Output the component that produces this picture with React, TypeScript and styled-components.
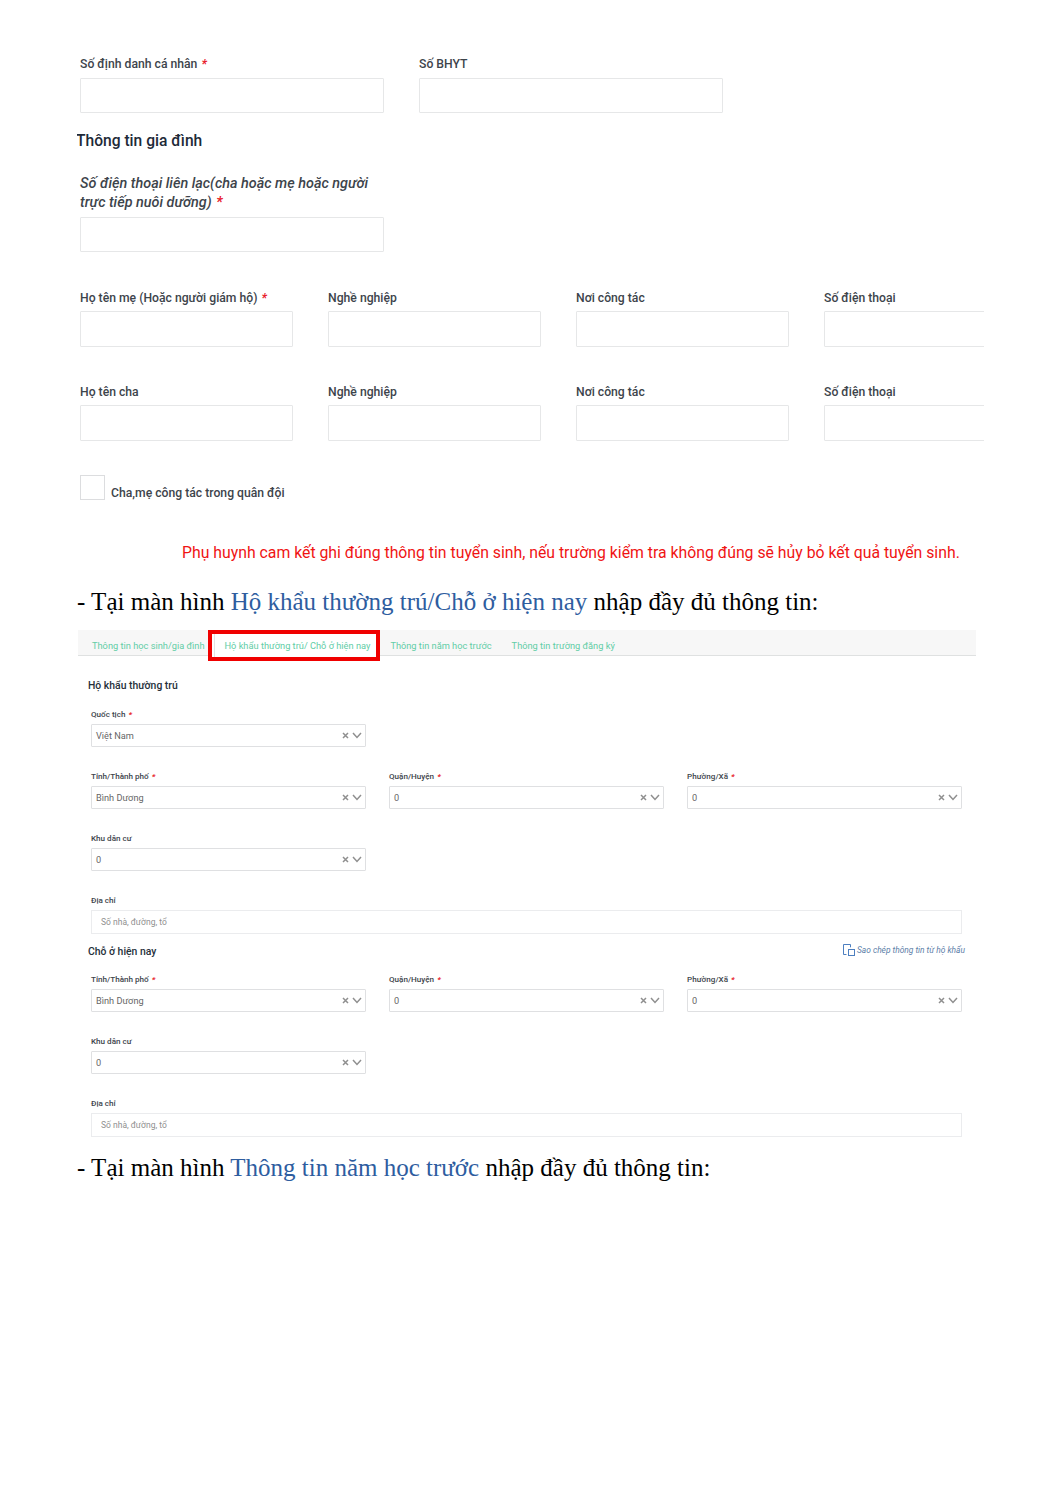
import React from 'react';
import styled, { createGlobalStyle } from 'styled-components';

const GlobalStyle = createGlobalStyle`
	html, body {
		margin: 0;
		padding: 0;
		background: #fff;
	}
	body {
		font-family: Roboto, 'Liberation Sans', sans-serif;
	}
`;

const Req = () => <Star>*</Star>;

const ClearIcon = () => (
	<svg width='7' height='7' viewBox='0 0 7 7' fill='none' stroke='#8f8f8f' strokeWidth='1.5'>
		<path d='M1 1l5 5M6 1l-5 5' />
	</svg>
);

const ChevronIcon = () => (
	<svg width='10' height='7' viewBox='0 0 10 7' fill='none' stroke='#8f8f8f' strokeWidth='1.5'>
		<path d='M1 1l4 4.4L9 1' />
	</svg>
);

const CopyIcon = () => (
	<svg width='12' height='12' viewBox='0 0 12 12' fill='none' stroke='#4d7fc0' strokeWidth='1'>
		<path d='M7.5.5H.5v10h3' />
		<path d='M7.5.5v2.8' />
		<rect x='5.5' y='5.5' width='6' height='6' />
	</svg>
);

const SelectBox = ({ label, value }: { label: string; value: string }) => (
	<SmallField>
		<SmallLabel>
			{label} <Req />
		</SmallLabel>
		<Select>
			<span>{value}</span>
			<SelectIcons>
				<ClearIcon />
				<ChevronIcon />
			</SelectIcons>
		</Select>
	</SmallField>
);

const KhuDanCu = () => (
	<SmallField>
		<SmallLabel>Khu dân cư</SmallLabel>
		<Select>
			<span>0</span>
			<SelectIcons>
				<ClearIcon />
				<ChevronIcon />
			</SelectIcons>
		</Select>
	</SmallField>
);

const AddressRow = () => (
	<Row3>
		<Wide>
			<SmallField>
				<SmallLabel>Địa chỉ</SmallLabel>
				<AddressInput>Số nhà, đường, tổ</AddressInput>
			</SmallField>
		</Wide>
	</Row3>
);

const AddressBlock = ({ province }: { province: string }) => (
	<>
		<Row3>
			<SelectBox label='Tỉnh/Thành phố' value={province} />
			<SelectBox label='Quận/Huyện' value='0' />
			<SelectBox label='Phường/Xã' value='0' />
		</Row3>
		<Row3>
			<KhuDanCu />
		</Row3>
		<AddressRow />
	</>
);

const App = () => {
	return (
		<Page>
			<GlobalStyle />
			<FamilyForm>
				<TwoCols>
					<div>
						<Label>
							Số định danh cá nhân <Req />
						</Label>
						<Input />
					</div>
					<div>
						<Label>Số BHYT</Label>
						<Input />
					</div>
				</TwoCols>
				<Heading>Thông tin gia đình</Heading>
				<PhoneField>
					<ItalicLabel>
						Số điện thoại liên lạc(cha hoặc mẹ hoặc người trực tiếp nuôi dưỡng) <Req />
					</ItalicLabel>
					<Input />
				</PhoneField>
				<ParentRow>
					<div>
						<Label>
							Họ tên mẹ (Hoặc người giám hộ) <Req />
						</Label>
						<TallInput />
					</div>
					<div>
						<Label>Nghề nghiệp</Label>
						<TallInput />
					</div>
					<div>
						<Label>Nơi công tác</Label>
						<TallInput />
					</div>
					<div>
						<Label>Số điện thoại</Label>
						<TallInput />
					</div>
				</ParentRow>
				<ParentRow>
					<div>
						<Label>Họ tên cha</Label>
						<TallInput />
					</div>
					<div>
						<Label>Nghề nghiệp</Label>
						<TallInput />
					</div>
					<div>
						<Label>Nơi công tác</Label>
						<TallInput />
					</div>
					<div>
						<Label>Số điện thoại</Label>
						<TallInput />
					</div>
				</ParentRow>
				<CheckRow>
					<CheckBox />
					<Label>Cha,mẹ công tác trong quân đội</Label>
				</CheckRow>
				<Warning>
					Phụ huynh cam kết ghi đúng thông tin tuyển sinh, nếu trường kiểm tra không đúng sẽ hủy bỏ kết quả tuyển sinh.
				</Warning>
			</FamilyForm>

			<DocLine>
				- Tại màn hình <Blue>Hộ khẩu thường trú/Chỗ ở hiện nay</Blue> nhập đầy đủ thông tin:
			</DocLine>

			<Shot>
				<Tabs>
					<Tab>Thông tin học sinh/gia đình</Tab>
					<Tab>
						Hộ khẩu thường trú/ Chỗ ở hiện nay
						<RedBox />
					</Tab>
					<Tab>Thông tin năm học trước</Tab>
					<Tab>Thông tin trường đăng ký</Tab>
				</Tabs>
				<Panel>
					<SectionHead>
						<SectionTitle>Hộ khẩu thường trú</SectionTitle>
					</SectionHead>
					<Row3 $first>
						<SelectBox label='Quốc tịch' value='Việt Nam' />
					</Row3>
					<AddressBlock province='Bình Dương' />
					<SectionHead $second>
						<SectionTitle>Chỗ ở hiện nay</SectionTitle>
						<CopyLink>
							<CopyIcon />
							Sao chép thông tin từ hộ khẩu
						</CopyLink>
					</SectionHead>
					<SecondBlock>
						<AddressBlock province='Bình Dương' />
					</SecondBlock>
				</Panel>
			</Shot>

			<LastLine>
				- Tại màn hình <Blue>Thông tin năm học trước</Blue> nhập đầy đủ thông tin:
			</LastLine>
		</Page>
	);
};

export default App;

const Page = styled.div`
	width: 1061px;
	height: 1500px;
	overflow: hidden;
	padding: 56px 0 0 77px;
	box-sizing: border-box;
`;

const FamilyForm = styled.div`
	width: 907px;
	padding-left: 3px;
	box-sizing: border-box;
	overflow: hidden;
`;

const TwoCols = styled.div`
	display: grid;
	grid-template-columns: 304px 304px;
	column-gap: 35px;
`;

const Label = styled.div`
	font-size: 12.2px;
	line-height: 16px;
	font-weight: 500;
	color: #3d444b;
	margin-bottom: 6px;
	white-space: nowrap;
`;

const Star = styled.span`
	margin-left: 1px;
	color: #e8202a;
	font-style: italic;
	font-weight: 700;
`;

const Input = styled.div`
	height: 35px;
	box-sizing: border-box;
	background: #fff;
	border: 1px solid #e6e7e8;
	border-radius: 1px;
`;

const TallInput = styled(Input)`
	height: 36px;
`;

const Heading = styled.h4`
	margin: 17px 0 0 -4px;
	font-size: 15.6px;
	line-height: 22px;
	font-weight: 500;
	color: #1e2a38;
`;

const PhoneField = styled.div`
	width: 304px;
	margin-top: 22px;
`;

const ItalicLabel = styled.div`
	width: 300px;
	font-size: 14.4px;
	line-height: 19px;
	font-style: italic;
	font-weight: 500;
	color: #3d444b;
	margin-bottom: 5px;
`;

const ParentRow = styled.div`
	display: grid;
	grid-template-columns: repeat(4, 213px);
	column-gap: 35px;
	margin-top: 38px;

	& + & {
		margin-top: 37px;
	}

	${Label} {
		margin-bottom: 5px;
	}
`;

const CheckRow = styled.div`
	display: flex;
	align-items: flex-end;
	gap: 6px;
	margin-top: 34px;

	${Label} {
		margin-bottom: -1px;
	}
`;

const CheckBox = styled.div`
	width: 25px;
	height: 25px;
	box-sizing: border-box;
	border: 1px solid #dcdddf;
`;

const Warning = styled.p`
	margin: 43px 0 0 102px;
	font-size: 15.8px;
	line-height: 20px;
	color: #f01414;
	white-space: nowrap;
`;

const DocLine = styled.p`
	margin: 24px 0 0;
	font-family: 'Liberation Serif', serif;
	font-size: 25px;
	line-height: 30px;
	color: #000;
	white-space: nowrap;
`;

const LastLine = styled(DocLine)`
	margin-top: 16px;
`;

const Blue = styled.span`
	color: #2e5d9f;
`;

const Shot = styled.div`
	width: 898px;
	margin: 13px 0 0 1px;
`;

const Tabs = styled.div`
	display: flex;
	gap: 20px;
	height: 26px;
	box-sizing: border-box;
	padding-left: 14px;
	background: #f7f7f7;
	border-bottom: 1px solid #dfe1e1;
	isolation: isolate;
`;

const Tab = styled.div`
	position: relative;
	font-size: 9.25px;
	line-height: 31px;
	color: #62cda6;
	white-space: nowrap;
`;

const RedBox = styled.span`
	position: absolute;
	z-index: -1;
	left: -17px;
	right: -10px;
	top: 0;
	height: 31px;
	box-sizing: border-box;
	background: #fff;
	border: 4px solid #f00000;

	&::before {
		content: '';
		position: absolute;
		left: 2px;
		top: 0;
		bottom: 0;
		width: 1px;
		background: #e3e3e3;
	}
`;

const Panel = styled.div`
	padding: 0 14px 0 13px;
`;

const SectionHead = styled.div<{ $second?: boolean }>`
	display: flex;
	justify-content: space-between;
	align-items: center;
	margin: ${(p) => (p.$second ? '11px -3px 0' : '23px -3px 0')};
	height: 14px;
`;

const SectionTitle = styled.div`
	font-size: 10.4px;
	line-height: 14px;
	font-weight: 500;
	color: #26303a;
`;

const CopyLink = styled.div`
	display: flex;
	align-items: center;
	gap: 2px;
	font-size: 8.4px;
	font-style: italic;
	color: #5c7ea8;
	position: relative;
	top: -2px;
`;

const Row3 = styled.div<{ $first?: boolean }>`
	display: grid;
	grid-template-columns: repeat(3, 275px);
	column-gap: 23px;
	margin-top: ${(p) => (p.$first ? '16px' : '24px')};
`;

const SecondBlock = styled.div`
	${Row3}:first-child {
		margin-top: 15px;
	}
`;

const Wide = styled.div`
	grid-column: 1 / -1;
`;

const SmallField = styled.div``;

const SmallLabel = styled.div`
	font-size: 8.1px;
	line-height: 10px;
	font-weight: 500;
	color: #3d444b;
	margin-bottom: 5px;
`;

const Select = styled.div`
	display: flex;
	align-items: center;
	justify-content: space-between;
	height: 23px;
	box-sizing: border-box;
	padding: 0 3px 0 4px;
	border: 1px solid #dfe0e2;
	border-radius: 1px;
	font-size: 9.2px;
	color: #666;
`;

const SelectIcons = styled.div`
	display: flex;
	align-items: center;
	gap: 3px;
`;

const AddressInput = styled.div`
	height: 24px;
	box-sizing: border-box;
	padding-left: 9px;
	border: 1px solid #ebecee;
	font-size: 8.5px;
	line-height: 22px;
	color: #8f8f8f;
`;
